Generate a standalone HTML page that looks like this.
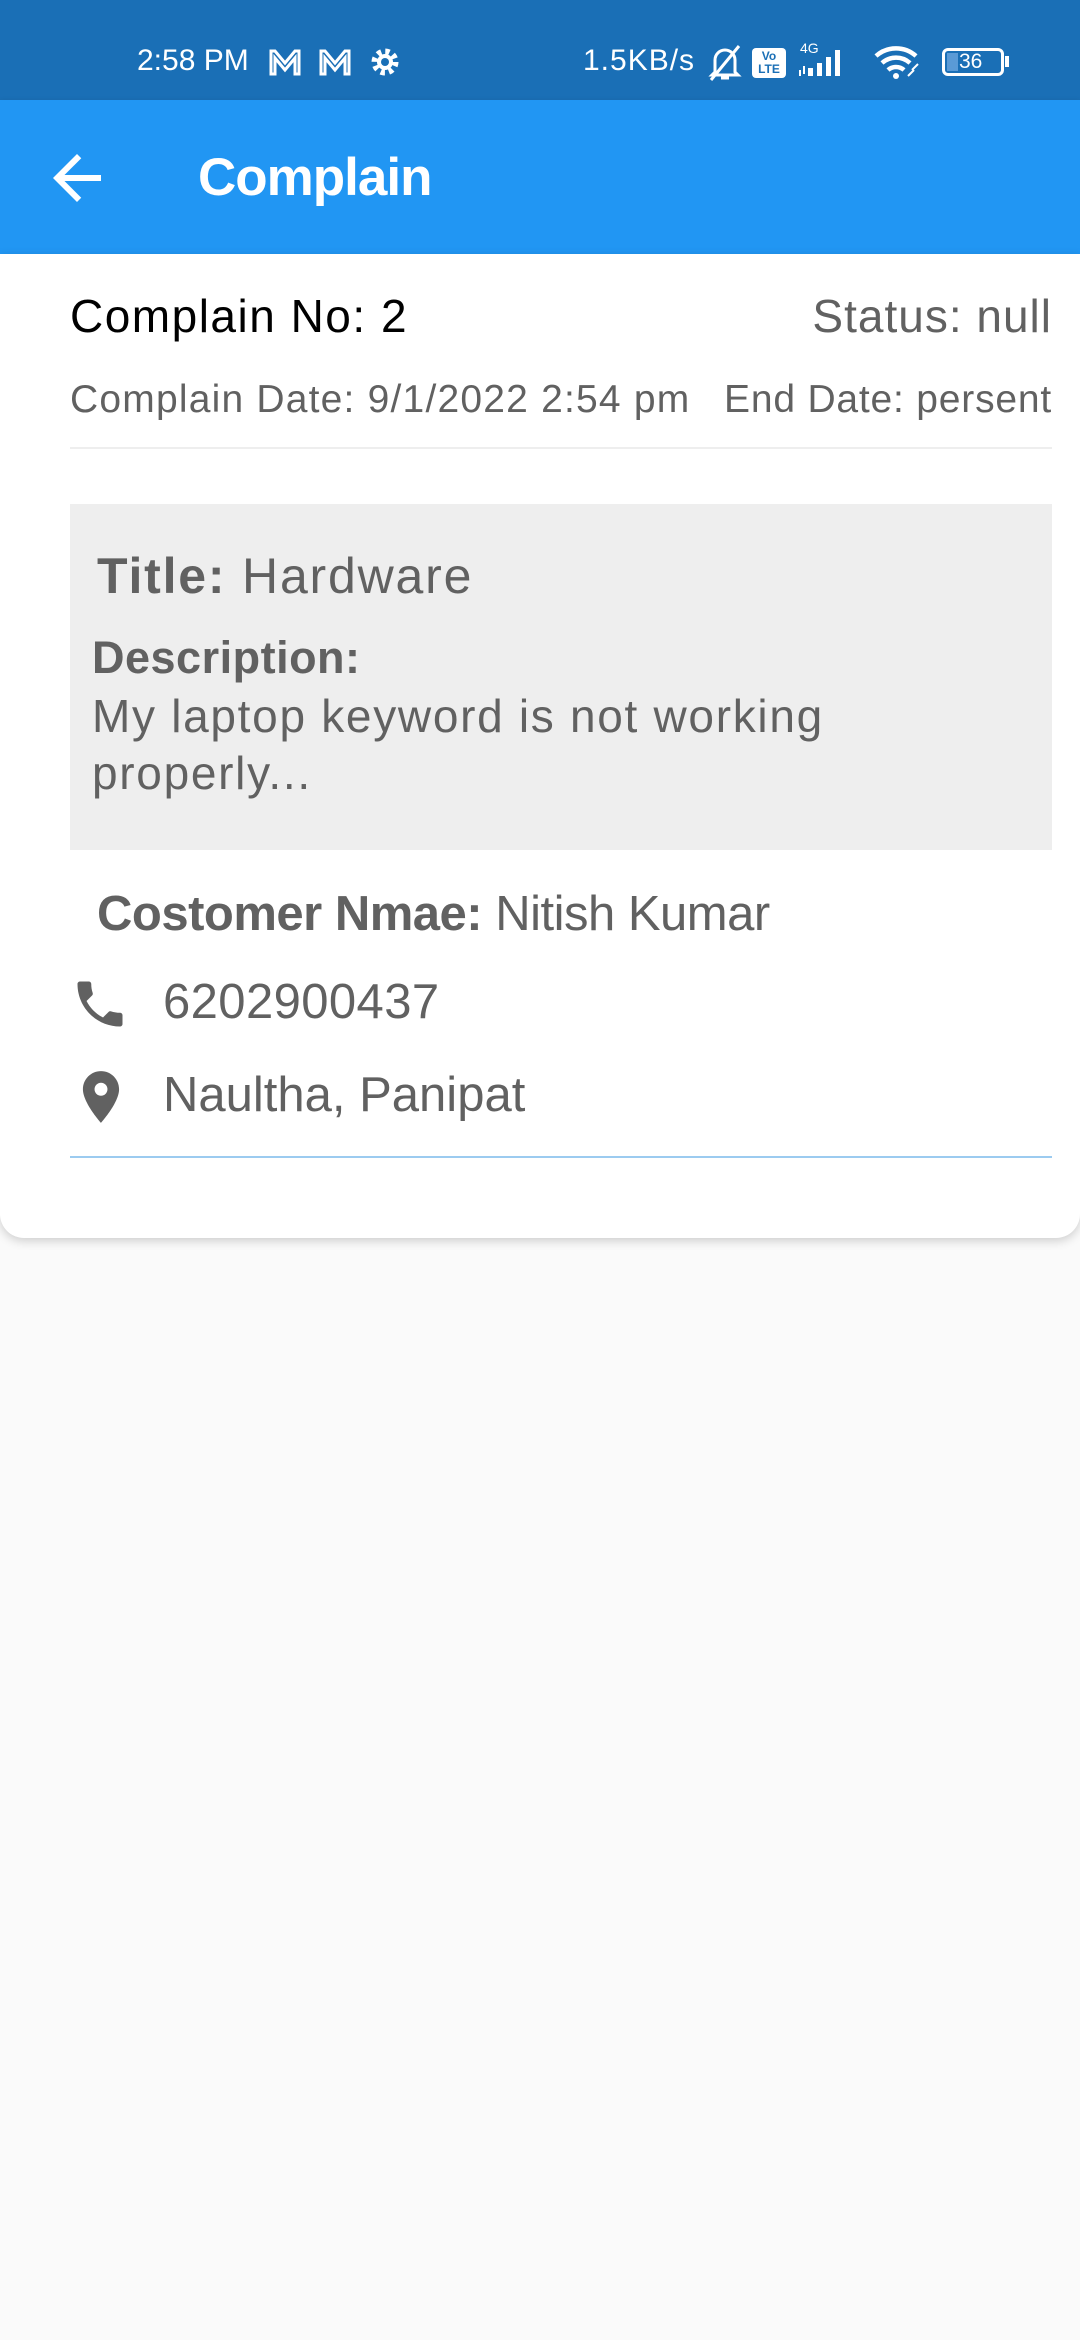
<!DOCTYPE html>
<html><head><meta charset="utf-8"><style>
*{margin:0;padding:0;box-sizing:border-box}
body{width:1080px;height:2340px;background:#fafafa;font-family:"Liberation Sans",sans-serif;position:relative;overflow:hidden}
.sb{position:absolute;left:0;top:0;width:1080px;height:100px;background:#1a6fb6;color:#fff}
.ab{position:absolute;left:0;top:100px;width:1080px;height:154px;background:#2196f3;box-shadow:0 3px 6px rgba(0,0,0,.25)}
.t{position:absolute;white-space:nowrap}
.card{position:absolute;left:0;top:254px;width:1080px;height:984px;background:#fff;border-radius:0 0 24px 24px;box-shadow:0 3px 10px rgba(0,0,0,.18)}
.g{color:#616161}
</style></head><body>
<div class="sb">
 <div class="t" style="left:137px;top:44px;font-size:30px;">2:58 PM</div>
 <svg class="t" style="left:268px;top:48px" width="34" height="28" viewBox="0 0 34 28"><path d="M3 26V3h4l10 12L27 3h4v23h-4V10L17 22 7 10v16z" fill="none" stroke="#fff" stroke-width="3"/></svg>
 <svg class="t" style="left:318px;top:48px" width="34" height="28" viewBox="0 0 34 28"><path d="M3 26V3h4l10 12L27 3h4v23h-4V10L17 22 7 10v16z" fill="none" stroke="#fff" stroke-width="3"/></svg>
 <svg class="t" style="left:369px;top:46px" width="32" height="32" viewBox="0 0 32 32"><circle cx="16" cy="16" r="10" fill="none" stroke="#fff" stroke-width="7" stroke-dasharray="4 3.85"/><circle cx="16" cy="16" r="8" fill="#fff"/><circle cx="16" cy="16" r="4" fill="#1a6fb6"/></svg>
 <div class="t" style="left:583px;top:44px;font-size:30px;letter-spacing:1px">1.5KB/s</div>
 <svg class="t" style="left:707px;top:44px" width="36" height="38" viewBox="0 0 36 38"><path d="M8 28V16a10 10 0 0120 0v12l3 3H5z M14 34h8" fill="none" stroke="#fff" stroke-width="3"/><path d="M4 36L32 2" stroke="#fff" stroke-width="3"/></svg>
 <div class="t" style="left:752px;top:48px;width:34px;height:30px;background:#fff;border-radius:4px;color:#1a6fb6;font-size:12px;font-weight:bold;line-height:13px;text-align:center;padding-top:2px">Vo<br>LTE</div>
 <div class="t" style="left:800px;top:40px;font-size:14px;">4G</div>
 <svg class="t" style="left:798px;top:48px" width="50" height="30" viewBox="0 0 50 30"><rect x="10" y="20" width="5" height="8" fill="#fff"/><rect x="19" y="15" width="5" height="13" fill="#fff"/><rect x="28" y="9" width="5" height="19" fill="#fff"/><rect x="37" y="2" width="5" height="26" fill="#fff"/><path d="M2 22v6M6 18v8" stroke="#fff" stroke-width="2"/></svg>
 <svg class="t" style="left:874px;top:44px" width="52" height="36" viewBox="0 0 52 36"><path d="M2 12a30 30 0 0140 0M8 19a21 21 0 0128 0M14 26a12 12 0 0116 0" fill="none" stroke="#fff" stroke-width="4.5"/><circle cx="22" cy="32" r="3" fill="#fff"/><path d="M38 26l6-6M34 32l6-6" stroke="#fff" stroke-width="2"/></svg>
 <div class="t" style="left:942px;top:48px;width:62px;height:28px;border:3px solid #fff;border-radius:6px;font-size:21px;line-height:22px;padding-left:14px"><span style="position:absolute;left:2px;top:2px;width:11px;height:18px;background:#5a9ad6"></span>36</div>
 <div class="t" style="left:1005px;top:56px;width:4px;height:11px;background:#fff"></div>
</div>
<div class="ab">
 <svg class="t" style="left:41px;top:42px" width="72" height="72" viewBox="0 0 24 24"><path d="M20 11H7.83l5.59-5.59L12 4l-8 8 8 8 1.41-1.41L7.83 13H20v-2z" fill="#fff"/></svg>
 <div class="t" style="left:198px;top:47px;font-size:53px;color:#fff;font-weight:bold;letter-spacing:-1px">Complain</div>
</div>
<div class="card">
 <div class="t" style="left:70px;top:35px;font-size:46px;color:#000;letter-spacing:1.5px">Complain No: 2</div>
 <div class="t g" style="right:28px;top:35px;font-size:46px;letter-spacing:1px">Status: null</div>
 <div class="t g" style="left:70px;top:124px;font-size:39px;letter-spacing:1.2px">Complain Date: 9/1/2022 2:54 pm</div>
 <div class="t g" style="right:28px;top:124px;font-size:39px;letter-spacing:0.8px">End Date: persent</div>
 <div class="t" style="left:70px;top:193px;width:982px;height:2px;background:#eee"></div>
 <div class="t" style="left:70px;top:250px;width:982px;height:346px;background:#eeeeee"></div>
 <div class="t g" style="left:97px;top:293px;font-size:50px;letter-spacing:1.8px"><b>Title:</b> Hardware</div>
 <div class="t g" style="left:92px;top:378px;font-size:45px;font-weight:bold;letter-spacing:0.5px">Description:</div>
 <div class="t g" style="left:92px;top:434px;font-size:46px;line-height:57px;letter-spacing:1.7px">My laptop keyword is not working<br>properly...</div>
 <div class="t g" style="left:97px;top:632px;font-size:49px;letter-spacing:-0.5px"><b>Costomer Nmae:</b> Nitish Kumar</div>
 <svg class="t" style="left:70px;top:720px" width="60" height="60" viewBox="0 0 24 24"><path d="M6.62 10.79c1.44 2.83 3.76 5.14 6.59 6.59l2.2-2.2c.27-.27.67-.36 1.02-.24 1.12.37 2.33.57 3.57.57.55 0 1 .45 1 1V20c0 .55-.45 1-1 1-9.39 0-17-7.61-17-17 0-.55.45-1 1-1h3.5c.55 0 1 .45 1 1 0 1.25.2 2.45.57 3.57.11.35.03.74-.25 1.02l-2.2 2.2z" fill="#616161"/></svg>
 <div class="t g" style="left:163px;top:720px;font-size:49px;letter-spacing:0.4px">6202900437</div>
 <svg class="t" style="left:70px;top:812px" width="62" height="62" viewBox="0 0 24 24"><path d="M12 2C8.13 2 5 5.13 5 9c0 5.25 7 13 7 13s7-7.75 7-13c0-3.87-3.13-7-7-7zm0 9.5a2.5 2.5 0 010-5 2.5 2.5 0 010 5z" fill="#616161"/></svg>
 <div class="t g" style="left:163px;top:813px;font-size:49px;">Naultha, Panipat</div>
 <div class="t" style="left:70px;top:902px;width:982px;height:2px;background:#9ccbf0"></div>
</div>
</body></html>
